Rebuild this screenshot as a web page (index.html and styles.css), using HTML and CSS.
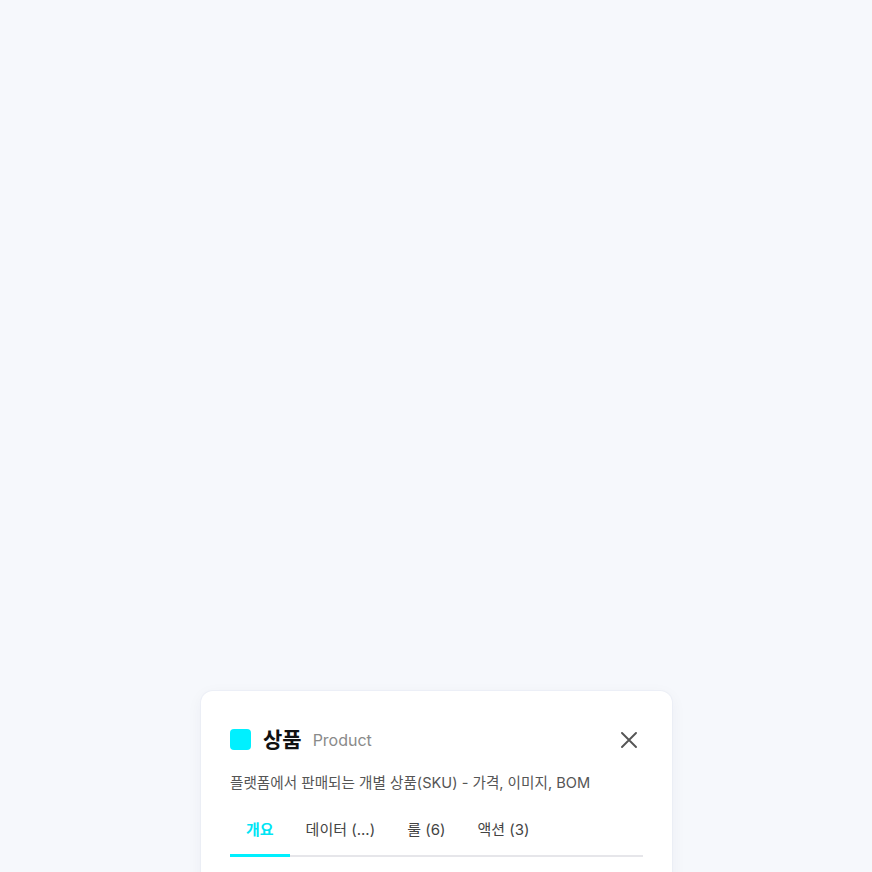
FILE: index.html
```html
<!DOCTYPE html>
<html lang="ko">
<head>
<meta charset="utf-8">
<title>상품</title>
<link rel="stylesheet" href="styles.css">
</head>
<body>
<div class="canvas"></div>
<section class="sheet">
  <header class="sheet-head">
    <span class="type-swatch"></span>
    <h1 class="title">상품</h1>
    <span class="subtitle">Product</span>
    <button class="close" aria-label="닫기">
      <svg width="16" height="16" viewBox="0 0 16 16" fill="none" stroke="#555" stroke-width="1.9" stroke-linecap="round"><path d="M1 1 15 15M15 1 1 15"/></svg>
    </button>
  </header>
  <p class="desc">플랫폼에서 판매되는 개별 상품(SKU) - 가격, 이미지, BOM</p>
  <nav class="tabs">
    <span class="tab active">개요</span>
    <span class="tab">데이터 (...)</span>
    <span class="tab">룰 (6)</span>
    <span class="tab">액션 (3)</span>
  </nav>
  <div class="sheet-body"></div>
</section>
</body>
</html>
```
FILE: styles.css
```css
html, body {
  margin: 0;
  height: 100%;
}
body {
  background: #f6f8fc;
  font-family: Inter, "Noto Sans CJK KR", sans-serif;
  overflow: hidden;
  position: relative;
}
.canvas {
  height: 100%;
}
.sheet {
  position: absolute;
  top: 691px;
  left: 201px;
  width: 471px;
  height: 400px;
  box-sizing: border-box;
  background: #fff;
  border-radius: 12px;
  box-shadow: 0 0 0 1px rgba(230, 234, 244, 0.5), 0 4px 16px rgba(30, 40, 80, 0.05);
  padding: 35px 29px 0;
}
.sheet-head {
  display: flex;
  align-items: center;
  height: 28px;
}
.type-swatch {
  width: 21px;
  height: 21px;
  border-radius: 4px;
  background: #00f0ff;
  margin-right: 12px;
  margin-top: -2px;
}
.title {
  margin: 0;
  font-size: 21px;
  font-weight: 700;
  color: #111;
  line-height: 28px;
}
.subtitle {
  margin-left: 11px;
  font-size: 16px;
  color: #8a8a8a;
  line-height: 28px;
}
.close {
  margin-left: auto;
  margin-right: 6px;
  width: 16px;
  height: 16px;
  padding: 0;
  border: 0;
  background: none;
  display: flex;
}
.desc {
  margin: 19px 0 0;
  font-size: 14.6px;
  line-height: 20px;
  color: #555;
}
.tabs {
  display: flex;
  margin-top: 16px;
  border-bottom: 2px solid #e6e6ea;
}
.tab {
  padding: 10px 16px 13px;
  font-size: 15px;
  line-height: 22px;
  color: #444;
  border-bottom: 3px solid transparent;
  margin-bottom: -2px;
}
.tab.active {
  color: #00e5f5;
  font-weight: 700;
  border-bottom-color: #00f0ff;
}
```
